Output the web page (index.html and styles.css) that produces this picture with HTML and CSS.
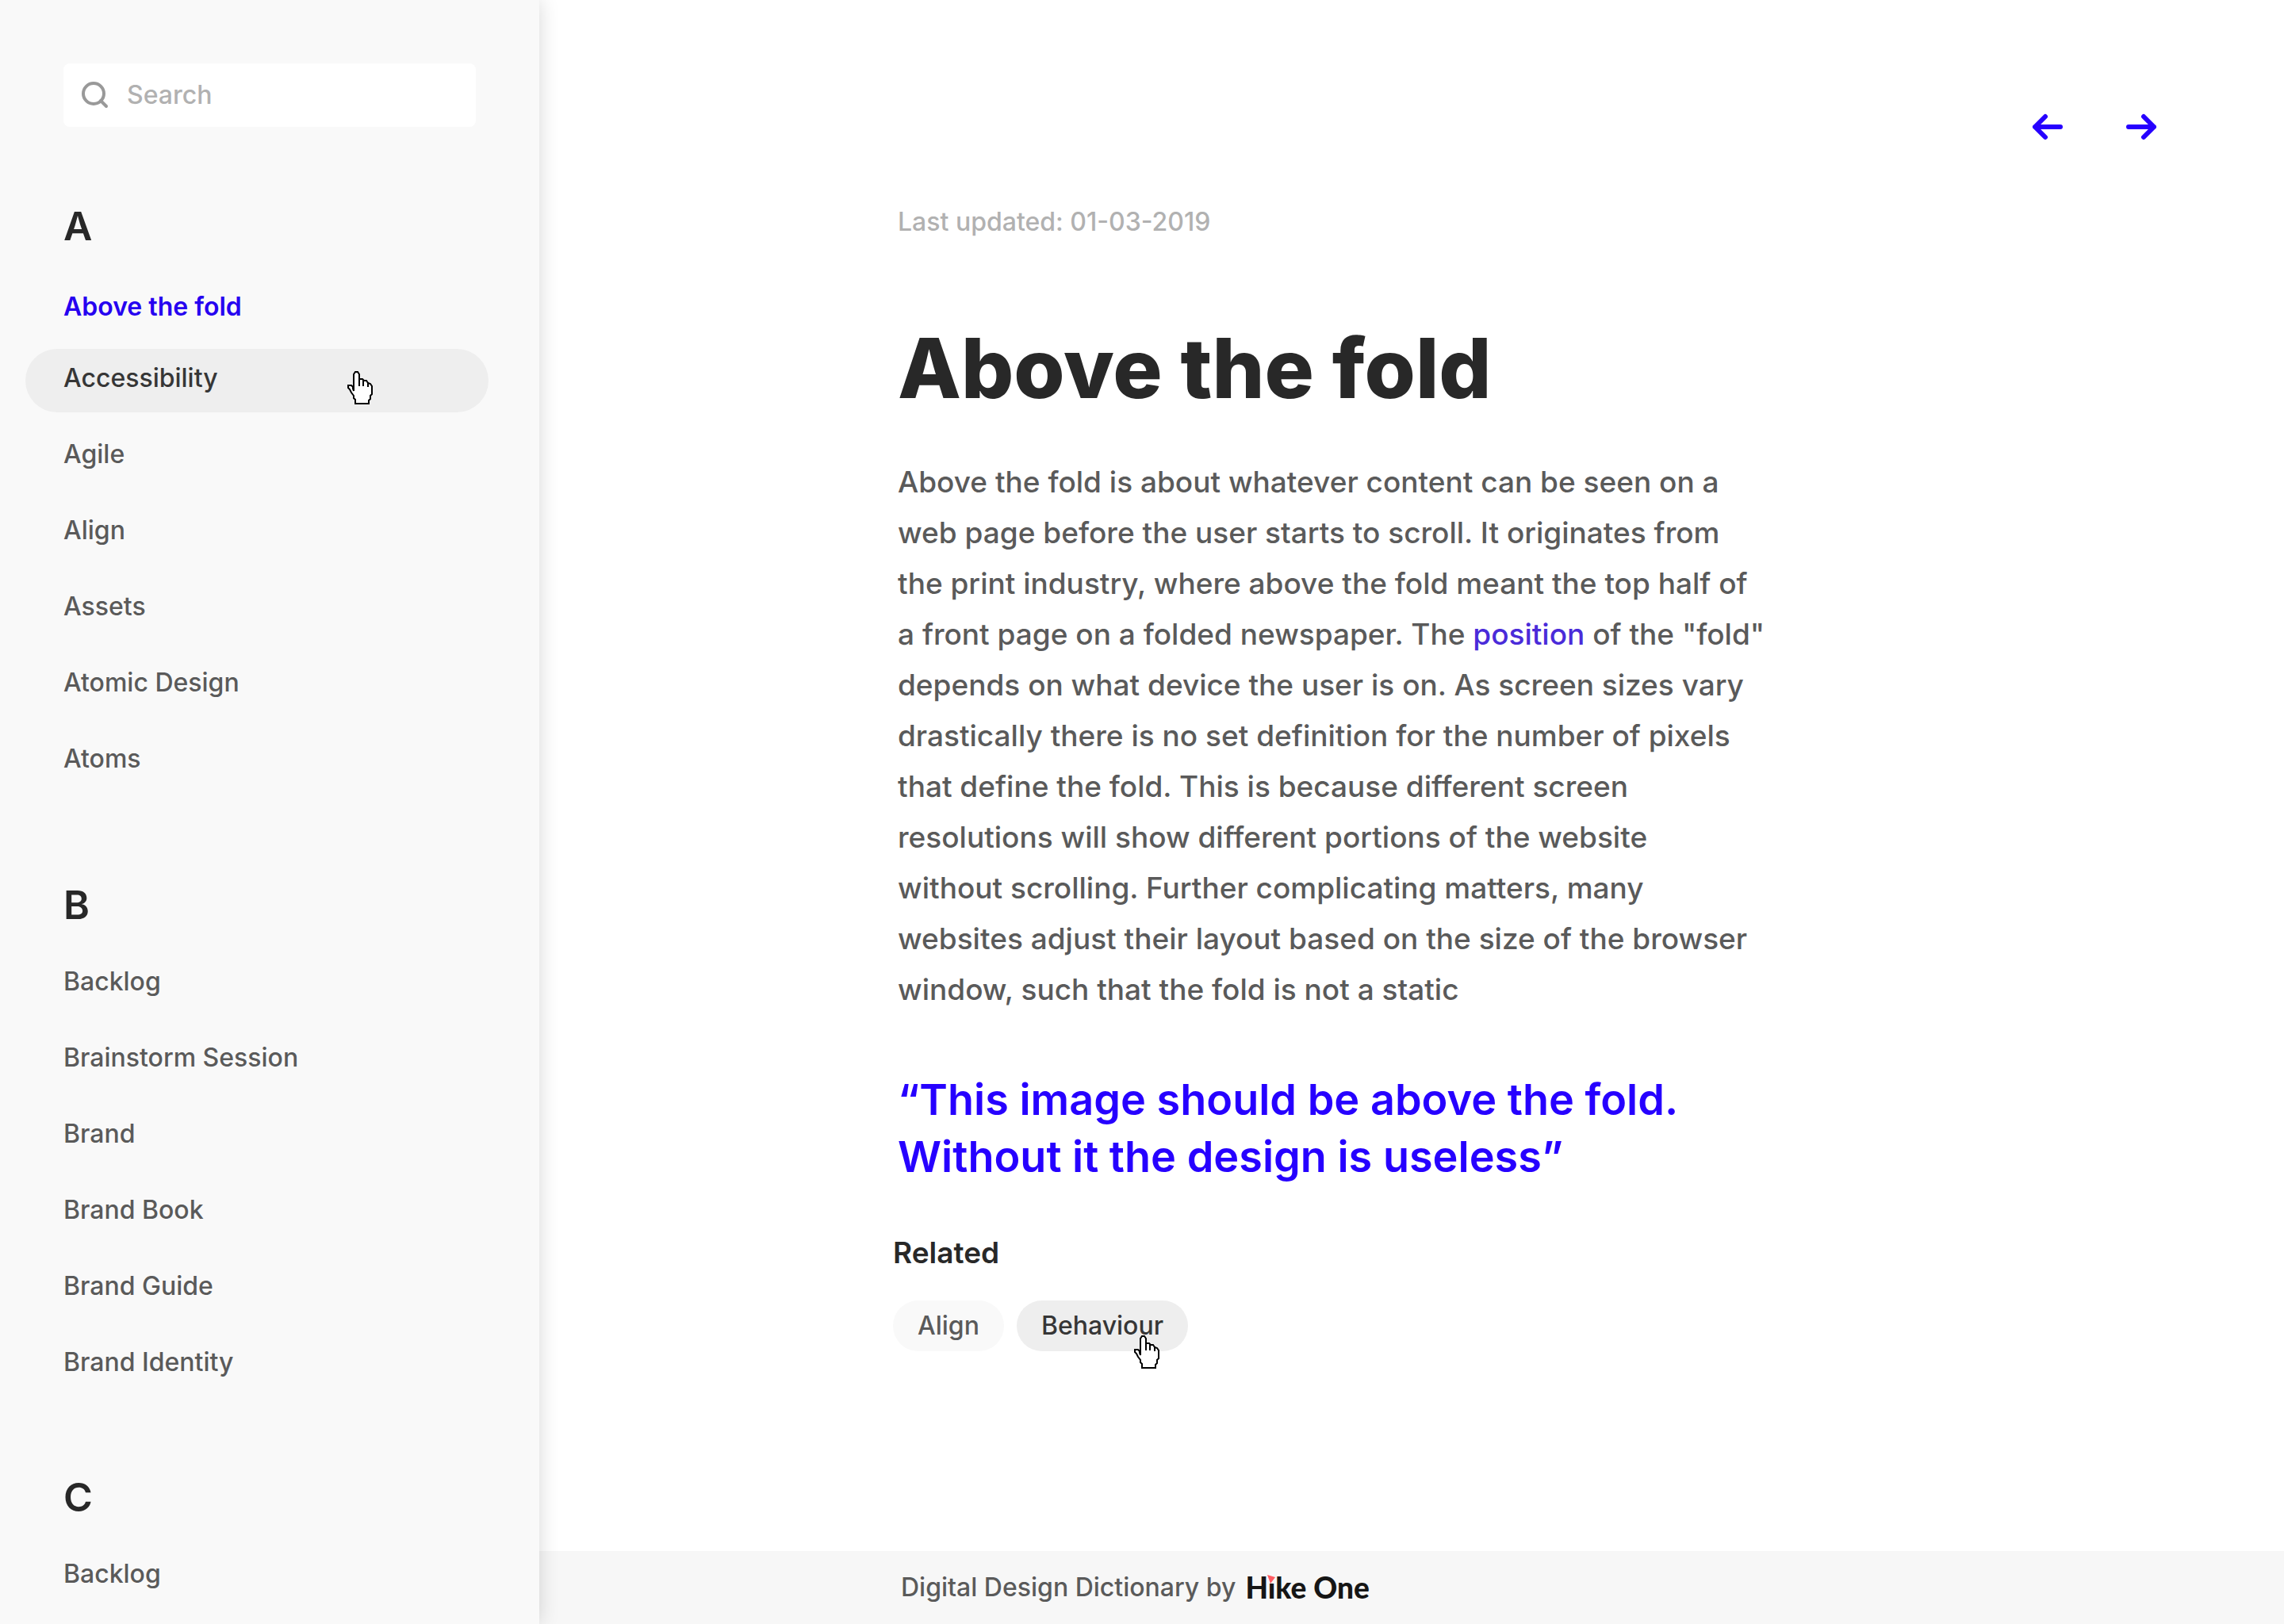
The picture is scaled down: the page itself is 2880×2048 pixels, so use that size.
FILE: index.html
```html
<!DOCTYPE html>
<html lang="en">
<head>
<meta charset="utf-8">
<meta name="viewport" content="width=device-width, initial-scale=1">
<title>Above the fold – Digital Design Dictionary</title>
<link rel="stylesheet" href="styles.css">
</head>
<body>
<svg class="defs" aria-hidden="true">
  <symbol id="hand" viewBox="0 0 33 42">
    <path d="M8 25V4L10 1H13L15 4V10L19 10L21 12L24 12L26 15L29 16L31 19V29L29 31V35L27 37V41H10V36L8 34V31L5 27L3 23L1 21V18H5L7 20V22Z" fill="#fff" stroke="#000" stroke-width="2"/>
    <path d="M15 9V19M20 11V19M26 14V20" fill="none" stroke="#000" stroke-width="2"/>
  </symbol>
</svg>
<div class="page">
  <aside class="sidebar">
    <form class="search" role="search">
      <svg class="search-icon" viewBox="0 0 34 34" aria-hidden="true"><circle cx="15" cy="15" r="13"/><path d="M24 24L31 31"/></svg>
      <input class="search-input" type="search" placeholder="Search" aria-label="Search">
    </form>
    <nav aria-label="Terms">
      <section class="group group-open">
        <h2 class="letter">A</h2>
        <ul class="terms">
          <li><a class="term term-active" href="#" aria-current="page">Above the fold</a></li>
          <li class="hovered"><a class="term term-hover" href="#">Accessibility</a><svg class="cursor cursor-term" aria-hidden="true"><use href="#hand"/></svg></li>
          <li><a class="term" href="#">Agile</a></li>
          <li><a class="term" href="#">Align</a></li>
          <li><a class="term" href="#">Assets</a></li>
          <li><a class="term" href="#">Atomic Design</a></li>
          <li><a class="term" href="#">Atoms</a></li>
        </ul>
      </section>
      <section class="group">
        <h2 class="letter">B</h2>
        <ul class="terms">
          <li><a class="term" href="#">Backlog</a></li>
          <li><a class="term" href="#">Brainstorm Session</a></li>
          <li><a class="term" href="#">Brand</a></li>
          <li><a class="term" href="#">Brand Book</a></li>
          <li><a class="term" href="#">Brand Guide</a></li>
          <li><a class="term" href="#">Brand Identity</a></li>
        </ul>
      </section>
      <section class="group">
        <h2 class="letter">C</h2>
        <ul class="terms">
          <li><a class="term" href="#">Backlog</a></li>
        </ul>
      </section>
    </nav>
  </aside>
  <div class="content">
    <header class="pager">
      <button class="pager-button" type="button" aria-label="Previous term"><svg viewBox="0 0 40 34" aria-hidden="true"><path d="M36 17H4M17 4L4 17L17 30"/></svg></button>
      <button class="pager-button" type="button" aria-label="Next term"><svg viewBox="0 0 40 34" aria-hidden="true"><path d="M4 17H36M23 4L36 17L23 30"/></svg></button>
    </header>
    <main class="article">
      <p class="updated">Last updated: 01-03-2019</p>
      <h1 class="title">Above the fold</h1>
      <p class="body">Above the fold is about whatever content can be seen on a<br>web page before the user starts to scroll. It originates from<br>the print industry, where above the fold meant the top half of<br>a front page on a folded newspaper. The <a class="link" href="#">position</a> of the "fold"<br>depends on what device the user is on. As screen sizes vary<br>drastically there is no set definition for the number of pixels<br>that define the fold. This is because different screen<br>resolutions will show different portions of the website<br>without scrolling. Further complicating matters, many<br>websites adjust their layout based on the size of the browser<br>window, such that the fold is not a static</p>
      <blockquote class="quote">“This image should be above the fold.<br>Without it the design is useless”</blockquote>
      <section class="related">
        <h2 class="related-title">Related</h2>
        <div class="chips">
          <a class="chip" href="#">Align</a>
          <a class="chip chip-hover" href="#">Behaviour<svg class="cursor cursor-chip" aria-hidden="true"><use href="#hand"/></svg></a>
        </div>
      </section>
    </main>
    <footer class="footer">
      <span>Digital Design Dictionary by</span>
      <a class="brand" href="#">Hike One<svg class="brand-flag" viewBox="0 0 12 14" aria-hidden="true"><path class="flag-gap" d="M0 0H11V12H0Z"/><path class="flag" d="M0 1L10 4L4 12Z"/></svg></a>
    </footer>
  </div>
</div>
</body>
</html>
```
FILE: styles.css
```css
* { box-sizing: border-box; }

body {
  margin: 0;
  background: #fff;
  color: #5a5a5a;
  font-family: Inter, "Liberation Sans", sans-serif;
  font-size: 32px;
  font-weight: 500;
  line-height: 40px;
}

h1, h2, p, ul, blockquote { margin: 0; padding: 0; }
ul { list-style: none; }
a { color: inherit; text-decoration: none; }

.defs { position: absolute; width: 0; height: 0; }

.page {
  display: grid;
  grid-template-columns: 680px 1fr;
  min-height: 100vh;
}

/* Sidebar */
.sidebar {
  padding: 80px 64px 0 80px;
  background: #f9f9f9;
  box-shadow: 0 0 24px rgba(0, 0, 0, 0.16);
  z-index: 1;
}

.search {
  display: flex;
  align-items: center;
  gap: 23px;
  width: 520px;
  height: 80px;
  margin-bottom: 97px;
  padding: 0 23px;
  background: #fff;
  border-radius: 8px;
}

.search-icon {
  width: 34px;
  height: 34px;
  fill: none;
  stroke: #999;
  stroke-width: 4;
  stroke-linecap: round;
}

.search-input {
  flex: 1;
  min-width: 0;
  padding: 0;
  border: 0;
  outline: 0;
  background: none;
  color: inherit;
  font: inherit;
}
.search-input::placeholder { color: #b1b1b1; opacity: 1; }

.group { padding-bottom: 105px; }
.group:last-child { padding-bottom: 0; }
.group-open { padding-bottom: 119px; }

.letter {
  margin-bottom: 32px;
  color: #282828;
  font-size: 50px;
  font-weight: 600;
  line-height: 56px;
}
.group-open .letter { margin-bottom: 37px; }

.terms { display: flex; flex-direction: column; gap: 22px; }
.term { display: block; line-height: 74px; }
.term-active { color: #2600f0; font-weight: 600; }

.hovered { position: relative; margin: -6px 0 -6px -48px; }
.term-hover {
  width: 584px;
  padding: 0 48px 6px;
  border-radius: 40px;
  background: #eee;
  color: #363636;
}

.cursor { position: absolute; width: 33px; height: 42px; }
.cursor-term { left: 406px; top: 28px; }
.cursor-chip { right: 35px; top: 44px; }

/* Content */
.content { display: flex; flex-direction: column; min-width: 0; }

.pager {
  display: flex;
  justify-content: flex-end;
  gap: 78px;
  padding: 143px 160px 0 0;
}
.pager-button {
  width: 40px;
  height: 34px;
  padding: 0;
  border: 0;
  background: none;
}
.pager-button svg {
  display: block;
  width: 40px;
  height: 34px;
  fill: none;
  stroke: #2600ff;
  stroke-width: 6;
  stroke-linecap: round;
  stroke-linejoin: round;
}

.article {
  flex: 1;
  max-width: 1620px;
  padding: 83px 0 80px 452px;
}
.updated { color: #b1b1b1; }
.title {
  margin-top: 104px;
  color: #282828;
  font-size: 104px;
  font-weight: 800;
  line-height: 120px;
}
.body { margin-top: 52px; font-size: 37px; line-height: 64px; }
.link { color: #4a2bd9; }
.quote {
  margin-top: 71px;
  color: #2600ff;
  font-size: 54px;
  font-weight: 600;
  line-height: 72px;
}
.related { margin: 65px 0 0 -6px; }
.related-title {
  color: #282828;
  font-size: 37px;
  font-weight: 600;
  line-height: 40px;
}
.chips { display: flex; gap: 16px; margin-top: 40px; }
.chip {
  padding: 0 31px;
  border-radius: 32px;
  background: #f9f9f9;
  line-height: 64px;
}
.chip-hover { position: relative; background: #eee; color: #363636; }

.footer {
  display: flex;
  align-items: center;
  gap: 12px;
  height: 92px;
  padding-left: 456px;
  background: #f7f7f7;
}
.brand {
  position: relative;
  color: #161616;
  font-family: Lato, sans-serif;
  font-size: 37px;
  font-weight: 900;
}
.brand-flag { position: absolute; left: 28px; top: 3px; width: 12px; height: 14px; }
.flag-gap { fill: #f7f7f7; }
.flag { fill: #ff5c62; }
```
